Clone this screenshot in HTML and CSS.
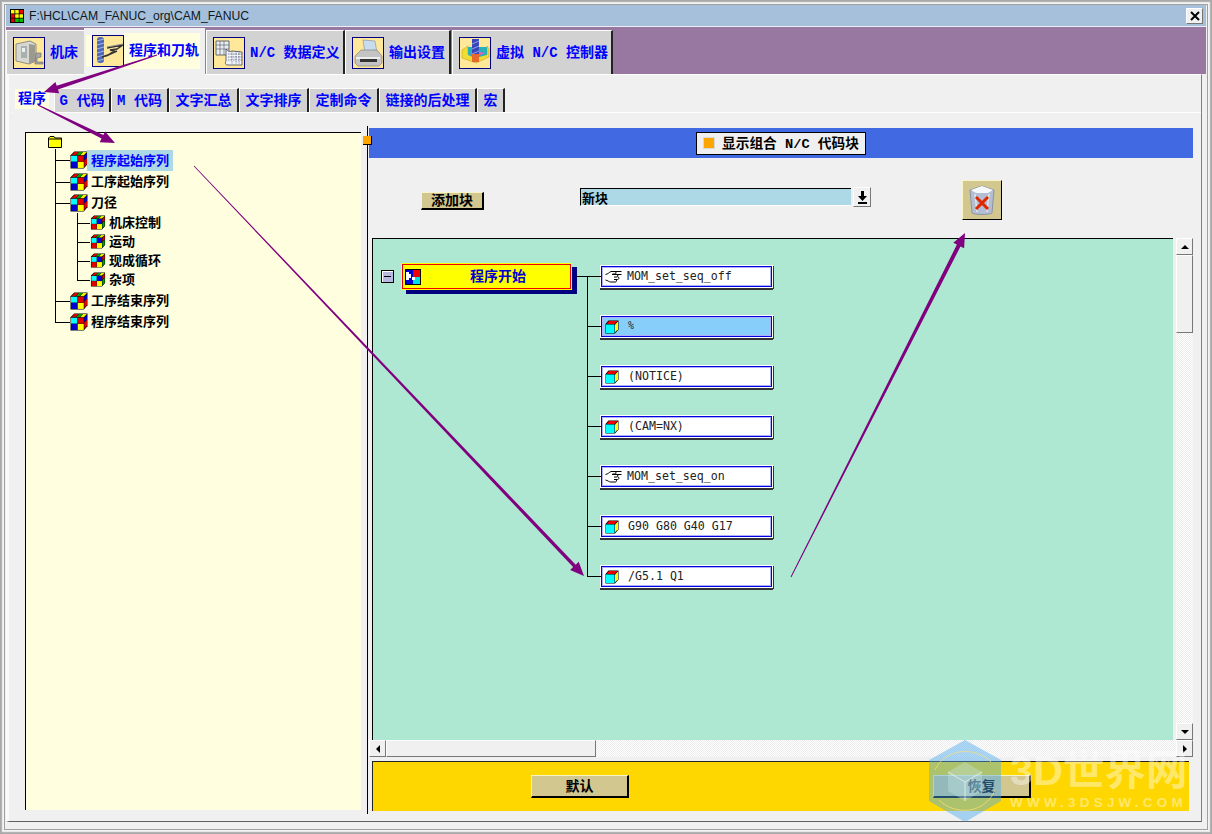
FILE: index.html
```html
<!DOCTYPE html>
<html lang="zh">
<head>
<meta charset="utf-8">
<title>CAM_FANUC</title>
<link rel="stylesheet" href="styles.css">
</head>
<body>
<svg class="defs" width="0" height="0" aria-hidden="true">
  <defs>
    <symbol id="rubik" viewBox="0 0 17 17">
      <path d="M4 .5h12.500v12L13 16.500H.5V4z" fill="#000"/>
      <path d="M4.500 1h3.600L5 4H1.500z" fill="#e00"/>
      <path d="M8.500 1h3.500L9 4H5.600z" fill="#00a000"/>
      <path d="M12.400 1H16l-3 3H9.500z" fill="#f0f000"/>
      <path d="M13.500 4.500 16 2v4l-2.500 2.500z" fill="#0000e0"/>
      <path d="M13.500 9 16 6.500V12l-2.500 3z" fill="#e00"/>
      <rect x="1" y="4.500" width="6" height="5.500" fill="#00ffff"/>
      <rect x="7.300" y="4.500" width="5.700" height="5.500" fill="#e00000"/>
      <rect x="1" y="10.300" width="6" height="5.700" fill="#0000d0"/>
      <rect x="7.300" y="10.300" width="5.700" height="5.700" fill="#ffff00"/>
    </symbol>
    <symbol id="rubik2" viewBox="0 0 17 17">
      <path d="M4 .5h12.500v12L13 16.500H.5V4z" fill="#000"/>
      <path d="M4.500 1h3.600L5 4H1.500z" fill="#e00"/>
      <path d="M8.500 1h3.500L9 4H5.600z" fill="#00a000"/>
      <path d="M12.400 1H16l-3 3H9.500z" fill="#f0f000"/>
      <path d="M13.500 4.500 16 2v4l-2.500 2.500z" fill="#e00"/>
      <path d="M13.500 9 16 6.500V12l-2.500 3z" fill="#00a000"/>
      <rect x="1" y="4.500" width="6" height="5.500" fill="#00ffff"/>
      <rect x="7.300" y="4.500" width="5.700" height="5.500" fill="#0000d0"/>
      <rect x="1" y="10.300" width="6" height="5.700" fill="#e00000"/>
      <rect x="7.300" y="10.300" width="5.700" height="5.700" fill="#ffff00"/>
    </symbol>
    <symbol id="cube" viewBox="0 0 14 14">
      <path d="M3.500.5h10v9L10 13.500H.5V4z" fill="#000"/>
      <path d="M4 1h8.500L9.500 4H1.500z" fill="#f00000"/>
      <path d="M10 4.500 13 1.500v7.800l-3 3z" fill="#ffff00"/>
      <rect x="1" y="4.500" width="8.500" height="8.500" fill="#00ffff"/>
    </symbol>
    <symbol id="hand" viewBox="0 0 18 14">
      <path d="M.5 4.500C3 4 4 2.500 6 1.500h10.500M9 1.500c2 0 3 2 1 2.500H7.500M7 4.500h9.500M12 4.500c1.500.5 1 2.500 0 2.500H9M13 7c1.500.5 1 2.500-.5 2.500H9M11 9.500c1 .5.500 2.500-.5 2.500H5.500C4 12 3 10.500.5 10" fill="#fff" stroke="#000" stroke-width="1"/>
    </symbol>
  </defs>
</svg>

<div class="window">
  <header class="titlebar">
    <svg class="app-icon" viewBox="0 0 14 14" width="14" height="14">
      <rect width="14" height="14" fill="#000"/>
      <rect x="1" y="1" width="3.500" height="3.500" fill="#ffff00"/>
      <rect x="5.250" y="1" width="3.500" height="3.500" fill="#ffff00"/>
      <rect x="9.500" y="1" width="3.500" height="3.500" fill="#f00000"/>
      <rect x="1" y="5.250" width="3.500" height="3.500" fill="#f00000"/>
      <rect x="5.250" y="5.250" width="3.500" height="3.500" fill="#ffff00"/>
      <rect x="9.500" y="5.250" width="3.500" height="3.500" fill="#ffff00"/>
      <rect x="1" y="9.500" width="3.500" height="3.500" fill="#e00000"/>
      <rect x="5.250" y="9.500" width="3.500" height="3.500" fill="#00c000"/>
      <rect x="9.500" y="9.500" width="3.500" height="3.500" fill="#00c000"/>
    </svg>
    <span class="title-text">F:\HCL\CAM_FANUC_org\CAM_FANUC</span>
    <button class="close-btn" type="button" aria-label="关闭">
      <svg viewBox="0 0 10 10" width="10" height="10"><path d="M1 1l8 8M9 1l-8 8" stroke="#000" stroke-width="2"/></svg>
    </button>
  </header>

  <nav class="main-tabs">
    <div class="main-tab tab-a">
      <span class="tab-icon">
        <svg viewBox="0 0 30 30" width="30" height="30">
          <path d="M2 6l14-3 6 3v17l-7 3-13-3z" fill="#d8d8d0" stroke="#777" stroke-width=".8"/>
          <path d="M7 8h6v12H7z" fill="#a8b0b0"/>
          <path d="M8 10h3v4H8z" fill="#e8f0f0"/>
          <path d="M15 6l6 1v16l-6 3z" fill="#9a9a90"/>
          <path d="M22 15h5v4l-4 1v4h6v2h-8z" fill="#a8a8a0" stroke="#666" stroke-width=".6"/>
        </svg>
      </span>
      <span class="tab-label">机床</span>
    </div>
    <div class="main-tab tab-b is-active">
      <span class="tab-icon">
        <svg viewBox="0 0 30 30" width="30" height="30">
          <rect x="4" y="1" width="7" height="26" rx="3" fill="#5068b8"/>
          <path d="M4 5l7-2M4 9l7-2M4 13l7-2M4 17l7-2M4 21l7-2M4 25l7-2" stroke="#a8b8e8" stroke-width="1"/>
          <path d="M14 12 30 9l-6 4-7 1 4 1-6 4-6 2M13 20l11-5" fill="none" stroke="#333" stroke-width="1.400"/>
          <path d="M14 11 30 8" stroke="#888" stroke-width="1"/>
        </svg>
      </span>
      <span class="tab-label">程序和刀轨</span>
    </div>
    <div class="main-tab tab-c">
      <span class="tab-icon">
        <svg viewBox="0 0 30 30" width="30" height="30">
          <path d="M2 3h13v14H2z" fill="#e8eef0" stroke="#445" stroke-width=".8"/>
          <path d="M2 7h13M2 11h13M6 3v14M10 3v14" stroke="#667" stroke-width=".7"/>
          <path d="M12 11c3 3 3 3 6 2l10 1v13H14c-3 0-3-2-2-4z" fill="#f0f4f8" stroke="#445" stroke-width=".8"/>
          <path d="M14 16h14M14 19h14M14 22h14M18 13v13M22 13v13M25 13v13" stroke="#557" stroke-width=".7" stroke-dasharray="1.500 1"/>
        </svg>
      </span>
      <span class="tab-label">N/C 数据定义</span>
    </div>
    <div class="main-tab tab-d">
      <span class="tab-icon">
        <svg viewBox="0 0 30 30" width="30" height="30">
          <path d="M10 2l12 1 2 12H12z" fill="#c8dcf0" stroke="#889" stroke-width=".6"/>
          <path d="M2 18l6-6h16l5 6v7l-3 3H5l-3-3z" fill="#c4c4c4" stroke="#777" stroke-width=".6"/>
          <path d="M3 19h24v2H3z" fill="#eee"/>
          <path d="M7 21h17v3H7z" fill="#333"/>
        </svg>
      </span>
      <span class="tab-label">输出设置</span>
    </div>
    <div class="main-tab tab-e">
      <span class="tab-icon">
        <svg viewBox="0 0 30 30" width="30" height="30">
          <path d="M2 12l6-4v8l7 3 12-3V8l2 3v8l-13 6-14-5z" fill="#f2dc30" stroke="#b89820" stroke-width=".5"/>
          <path d="M8 9h19v8l-12 3-7-3z" fill="#28b0b8"/>
          <path d="M10 16l5-3 10 2-9 4z" fill="#e060c0"/>
          <rect x="12" y="1" width="7" height="23" fill="#3848b8"/>
          <path d="M12 6l7-3M12 11l7-3M12 16l7-3" stroke="#90a0e8"/>
          <rect x="12" y="16" width="7" height="8" fill="#e8682c"/>
        </svg>
      </span>
      <span class="tab-label">虚拟 N/C 控制器</span>
    </div>
  </nav>

  <div class="panel">
    <nav class="sub-tabs">
      <div class="sub-tab st1 is-active"><span>程序</span></div>
      <div class="sub-tab st2"><span>G 代码</span></div>
      <div class="sub-tab st2b"><span>M 代码</span></div>
      <div class="sub-tab st3"><span>文字汇总</span></div>
      <div class="sub-tab st3"><span>文字排序</span></div>
      <div class="sub-tab st3"><span>定制命令</span></div>
      <div class="sub-tab st4"><span>链接的后处理</span></div>
      <div class="sub-tab st5"><span>宏</span></div>
    </nav>

    <div class="workspace">
      <section class="tree">
        <svg class="folder" viewBox="0 0 14 12" width="14" height="12">
          <path d="M.5 11.500V2L2 .5h4L7 2h6.500v9.500z" fill="#ffff00" stroke="#000"/>
          <path d="M1 3h12" stroke="#000"/>
        </svg>
        <div class="tree-list">
          <div class="node node-first"><svg class="ico-l"><use href="#rubik"/></svg><span class="node-text is-selected">程序起始序列</span></div>
          <div class="node"><svg class="ico-l"><use href="#rubik"/></svg><span class="node-text">工序起始序列</span></div>
          <div class="node"><svg class="ico-l"><use href="#rubik"/></svg><span class="node-text">刀径</span></div>
          <div class="sub-node sub-first"><svg class="ico-s"><use href="#rubik2"/></svg><span class="node-text">机床控制</span></div>
          <div class="sub-node"><svg class="ico-s"><use href="#rubik2"/></svg><span class="node-text">运动</span></div>
          <div class="sub-node"><svg class="ico-s"><use href="#rubik2"/></svg><span class="node-text">现成循环</span></div>
          <div class="sub-node sub-last"><svg class="ico-s"><use href="#rubik2"/></svg><span class="node-text">杂项</span></div>
          <div class="node"><svg class="ico-l"><use href="#rubik"/></svg><span class="node-text">工序结束序列</span></div>
          <div class="node node-last"><svg class="ico-l"><use href="#rubik"/></svg><span class="node-text">程序结束序列</span></div>
        </div>
      </section>

      <div class="splitter"><span class="handle"></span></div>

      <section class="editor">
        <div class="blue-bar">
          <div class="bar-label"><span class="orange-dot"></span><span class="bar-text">显示组合 N/C 代码块</span></div>
        </div>

        <div class="toolbar">
          <button class="khaki-btn add-btn" type="button">添加块</button>
          <div class="combo">
            <div class="combo-field">新块</div>
            <button class="combo-btn" type="button" aria-label="下拉">
              <svg viewBox="0 0 11 13" width="11" height="13"><path d="M4 0h3v5h3L5.500 10 1 5h3zM1 11h9v2H1z" fill="#000"/></svg>
            </button>
          </div>
          <button class="trash-btn" type="button" aria-label="删除">
            <svg viewBox="0 0 28 32" width="28" height="32">
              <path d="M2 6l12-4 12 4-2 23c-3 2-17 2-20 0z" fill="#b4bed2" stroke="#8088a0" stroke-width=".8"/>
              <path d="M3 6l11-4 11 4-5 3H8z" fill="#f6f8fc"/>
              <path d="M7 10l2 18M21 10l-2 18" stroke="#dfe5f0" stroke-width="1.500"/>
              <path d="M8 13l12 12M20 13 8 25" stroke="#e02800" stroke-width="3"/>
            </svg>
          </button>
        </div>

        <div class="view-row">
          <div class="canvas">
            <div class="diagram">
              <span class="minus-box"><span></span></span>
              <div class="root-wrap">
                <div class="root-node">
                  <svg class="puzzle" viewBox="0 0 16 16" width="16" height="16">
                    <rect width="16" height="16" fill="#000"/>
                    <rect x="1" y="1" width="7" height="14" fill="#0000d0"/>
                    <rect x="8" y="1" width="7" height="7" fill="#f00000"/>
                    <rect x="8" y="8" width="7" height="7" fill="#00e0e0"/>
                    <path d="M1 3h3v2h2v4H4v2H1zM7 8h3v3H7z" fill="#fff"/>
                  </svg>
                  <span class="root-text">程序开始</span>
                </div>
              </div>
              <div class="blocks">
                <div class="block"><svg class="ico-hand"><use href="#hand"/></svg><span class="block-text">MOM_set_seq_off</span></div>
                <div class="block is-current"><svg class="ico-cube"><use href="#cube"/></svg><span class="block-text">%</span></div>
                <div class="block"><svg class="ico-cube"><use href="#cube"/></svg><span class="block-text">(NOTICE)</span></div>
                <div class="block"><svg class="ico-cube"><use href="#cube"/></svg><span class="block-text">(CAM=NX)</span></div>
                <div class="block"><svg class="ico-hand"><use href="#hand"/></svg><span class="block-text">MOM_set_seq_on</span></div>
                <div class="block"><svg class="ico-cube"><use href="#cube"/></svg><span class="block-text">G90 G80 G40 G17</span></div>
                <div class="block"><svg class="ico-cube"><use href="#cube"/></svg><span class="block-text">/G5.1 Q1</span></div>
              </div>
            </div>
          </div>
          <div class="vscroll">
            <button class="sb-btn" type="button" aria-label="上"><span class="tri tri-up"></span></button>
            <div class="sb-thumb-v"></div>
            <div class="sb-track"></div>
            <button class="sb-btn" type="button" aria-label="下"><span class="tri tri-down"></span></button>
          </div>
        </div>

        <div class="hscroll">
          <button class="sb-btn" type="button" aria-label="左"><span class="tri tri-left"></span></button>
          <div class="sb-thumb-h"></div>
          <div class="sb-track"></div>
          <button class="sb-btn" type="button" aria-label="右"><span class="tri tri-right"></span></button>
        </div>

        <div class="action-bar">
          <button class="khaki-btn wide-btn" type="button">默认</button>
          <button class="khaki-btn wide-btn" type="button">恢复</button>
        </div>
      </section>
    </div>
  </div>

  <svg class="arrows" viewBox="0 0 1212 834" width="1212" height="834" aria-hidden="true">
    <polygon fill="#800080" points="157.200,55.500 57.900,89.550 59.200,93.350 44,92 55.400,81.950 56.700,85.750 156.800,54.500"/>
    <polygon fill="#800080" points="37.800,105.400 101.500,138.600 99.700,142.200 115,143 105.100,131.400 103.300,135 38.200,104.600"/>
    <polygon fill="#800080" points="193.700,166.300 573.100,567.100 570.100,570 584,576 578.700,561.800 575.700,564.700 194.300,165.700"/>
    <polygon fill="#800080" points="791.400,577.200 960.500,246.400 964.100,248.200 965,233 953.300,242.800 956.900,244.600 790.600,576.800"/>
  </svg>

  <div class="watermark">
    <svg class="wm-logo" viewBox="0 0 72 82" width="72" height="82" aria-hidden="true">
      <path d="M36 0l36 20v41L36 82 0 61V20z" fill="#4aa8f0" fill-opacity=".45"/>
      <path d="M36 22l17 10v19L36 61 19 51V32z" fill="#c8e8e8" fill-opacity=".35"/>
      <path d="M19 32l17 10 17-10M36 42v19" stroke="#ffffff" stroke-opacity=".6" fill="none"/>
      <path d="M6 30c10-22 40-24 56-8M66 50C56 74 26 76 10 60" stroke="#ffe070" stroke-opacity=".7" fill="none"/>
    </svg>
    <div class="wm-text">
      <div class="wm-big">3D世界网</div>
      <div class="wm-small">WWW.3DSJW.COM</div>
    </div>
  </div>
</div>
</body>
</html>
```

FILE: styles.css
```css
* { box-sizing: border-box; }

html, body { margin: 0; padding: 0; }

body {
  width: 1212px;
  height: 834px;
  overflow: hidden;
  font-family: "Noto Sans CJK SC", sans-serif;
  background: #f0f0f0;
}

button { padding: 0; margin: 0; font-family: inherit; cursor: default; }

.defs { position: absolute; }

.window {
  position: relative;
  width: 1212px;
  height: 834px;
  padding: 5px 6px 12px 6px;
  display: flex;
  flex-direction: column;
  background: #f0f0f0;
  box-shadow:
    inset 0 0 0 1px #a8a8a8,
    inset 0 0 0 2px #b4b4b4,
    inset 0 0 0 3px #e8e8e8,
    inset 0 0 0 4px #f4f4f4,
    inset 0 0 0 5px #a0a0a0;
}

/* Title bar */
.titlebar {
  height: 22px;
  flex: none;
  display: flex;
  align-items: center;
  padding-left: 4px;
  background: #a6c0dc;
  border-bottom: 1px solid #e8eef4;
}

.app-icon { flex: none; margin-right: 5px; }

.title-text {
  font-family: "Liberation Sans", sans-serif;
  font-size: 12.200px;
  color: #101820;
}

.close-btn {
  margin-left: auto;
  margin-right: 3px;
  width: 17px;
  height: 16px;
  display: flex;
  align-items: center;
  justify-content: center;
  background: #f0f0f0;
  border: 1px solid #fff;
  border-right-color: #777;
  border-bottom-color: #777;
}

/* Main tabs */
.main-tabs {
  height: 47px;
  flex: none;
  display: flex;
  align-items: stretch;
  background: #9878a0;
}

.main-tab {
  margin-top: 3px;
  display: flex;
  align-items: center;
  padding-left: 6px;
  background: #d2d2d2;
  border-top: 1px solid #fff;
  border-left: 1px solid #fff;
  border-right: 2px solid #222;
}

.tab-a { width: 78px; border-right: 0; }
.tab-b { width: 121px; }
.tab-c { width: 139px; margin-left: 1px; }
.tab-d { width: 106px; }
.tab-e { width: 161px; margin-left: 1px; }

.main-tab.is-active {
  margin-top: 1px;
  background: #f0f0f0;
  border: 0;
  padding-left: 8px;
  position: relative;
}

.tab-icon {
  flex: none;
  width: 32px;
  height: 32px;
  border: 1px solid #000080;
  background: #ffe89a;
  display: block;
}

.tab-icon svg { display: block; }

.tab-label {
  margin-left: 5px;
  margin-bottom: 0;
  font-family: "Liberation Mono", "Noto Sans CJK SC", monospace;
  font-weight: 700;
  font-size: 14px;
  line-height: 18px;
  color: #0000ff;
  white-space: pre;
}

.is-active .tab-label {
  margin-left: 0;
  margin-bottom: 2px;
  padding-left: 5px;
  padding-right: 1px;
  padding-bottom: 0;
  background: #ffffe0;
  line-height: 36px;
}

.main-tab.is-active .tab-icon { box-shadow: -6px 0 0 0 #ffffe0, 6px 0 0 0 #ffffe0; margin-bottom: 1px; }

/* Panel below tabs */
.panel {
  flex: 1;
  min-height: 0;
  display: flex;
  flex-direction: column;
  margin-right: 4px;
  padding: 13px 0 0 7px;
  border-top: 1px solid #fff;
  border-left: 3px solid #fafafa;
  border-right: 1px solid #808080;
  border-bottom: 1px solid #606060;
  background: #f0f0f0;
}

.tab-b.is-active { z-index: 1; margin-bottom: -1px; }

.sub-tabs {
  height: 25px;
  flex: none;
  display: flex;
  border-bottom: 1px solid #fff;
  margin-left: -4px;
  padding-left: 1px;
}

.sub-tab {
  height: 24px;
  display: flex;
  align-items: center;
  justify-content: center;
  padding-bottom: 4px;
  background: #d2d2d2;
  border-top: 1px solid #fff;
  border-left: 1px solid #fff;
  border-right: 2px solid #222;
  font-family: "Liberation Mono", "Noto Sans CJK SC", monospace;
  font-weight: 700;
  font-size: 14px;
  color: #0000ff;
  white-space: pre;
}

.sub-tab.st1 { width: 41px; padding-right: 3px; padding-bottom: 4px; }
.st2 { width: 57px; }
.st2b { width: 58px; }
.st3 { width: 70px; }
.st4 { width: 98px; }
.st5 { width: 28px; }

.sub-tab.is-active {
  background: #f0f0f0;
  border: 0;
  height: 25px;
}

.sub-tab.is-active > span { background: #ffffe0; padding: 0 3px; line-height: 20px; }

/* Workspace */
.workspace {
  flex: 1;
  min-height: 0;
  display: flex;
  padding-top: 19px;
  padding-left: 9px;
}

/* Tree */
.tree {
  width: 336px;
  flex: none;
  height: 678px;
  background: #ffffe0;
  border-top: 1px solid #000;
  border-left: 1px solid #000;
  padding: 3px 0 0 22px;
}

.folder { display: block; }

.tree-list {
  display: flex;
  flex-direction: column;
  margin-top: 1px;
  background: linear-gradient(#000, #000) 7px 0 / 1px 162px no-repeat;
}

.node, .sub-node {
  position: relative;
  display: flex;
  align-items: center;
  height: 21px;
}

.node-first { height: 22px; }

.node::before, .sub-node::before {
  content: "";
  position: absolute;
  background: #000;
  height: 1px;
  top: 50%;
}

.node::after, .sub-node::after {
  content: "";
  position: absolute;
  background: #000;
  width: 1px;
  top: 0;
  height: 100%;
}

.node { padding-left: 22px; }
.node::before { left: 7px; width: 15px; }
.node::after { left: 7px; }
.node-last::after { height: 50%; }

.sub-node { height: 19px; padding-left: 42px; }
.sub-node::before { left: 29px; width: 13px; }
.sub-node::after { left: 29px; }
.sub-last::after { height: 50%; }
.sub-last { margin-bottom: 1px; }

.sub-node > svg { position: relative; z-index: 1; }

.ico-l { width: 18px; height: 18px; flex: none; }
.ico-s { width: 16px; height: 15px; flex: none; }

.node-text {
  margin-left: 3px;
  padding-bottom: 2px;
  font-family: "Noto Sans CJK SC", sans-serif;
  font-weight: 700;
  font-size: 13px;
  line-height: 19px;
  color: #000;
  white-space: pre;
}

.node-text.is-selected {
  margin-left: -1px;
  padding: 0 4px 2px;
  background: #add8e6;
  color: #0000ff;
}

/* Splitter */
.splitter {
  position: relative;
  width: 1px;
  margin-left: 6px;
  margin-top: -6px;
  height: 688px;
  flex: none;
  background: #000;
}

.handle {
  position: absolute;
  left: -4px;
  top: 10px;
  width: 9px;
  height: 9px;
  background: #ffa500;
  border-right: 1px solid #000;
  border-bottom: 1px solid #000;
}

/* Editor */
.editor {
  width: 824px;
  flex: none;
  margin-left: 1px;
  margin-top: -4px;
  display: flex;
  flex-direction: column;
}

.blue-bar {
  height: 30px;
  flex: none;
  background: #4169e1;
  display: flex;
  align-items: center;
  justify-content: center;
}

.bar-label {
  width: 170px;
  height: 23px;
  display: flex;
  align-items: center;
  gap: 7px;
  padding-left: 6px;
  background: #f0f0f0;
  border: 1px solid #000;
  font-family: "Liberation Mono", "Noto Sans CJK SC", monospace;
  font-weight: 700;
  font-size: 13.700px;
  color: #000;
  white-space: pre;
}

.bar-text { padding-bottom: 3px; }

.orange-dot {
  width: 12px;
  height: 12px;
  background: #ffa500;
  border: 1px solid #d8d8d8;
  flex: none;
}

.toolbar {
  height: 80px;
  flex: none;
  position: relative;
  display: flex;
  align-items: flex-start;
  padding-left: 52px;
}

.khaki-btn {
  display: block;
  background: #d1c78f;
  border: 1px solid #f8f4c8;
  border-right: 2px solid #000;
  border-bottom: 2px solid #000;
  font-family: "Noto Sans CJK SC", sans-serif;
  font-weight: 700;
  font-size: 14px;
  color: #000;
}

.add-btn { width: 63px; height: 18px; margin-top: 34px; line-height: 12px; padding-bottom: 3px; }

.combo { display: flex; align-items: flex-start; margin-left: 96px; margin-top: 30px; }

.combo-field {
  width: 271px;
  height: 18px;
  padding-left: 1px;
  background: #add8e6;
  border-top: 1px solid #000;
  border-left: 1px solid #000;
  border-bottom: 1px solid #fff;
  font-weight: 700;
  font-size: 13px;
  line-height: 17px;
  color: #000;
}

.combo-btn {
  width: 18px;
  height: 20px;
  margin-left: 2px;
  margin-top: -1px;
  display: flex;
  align-items: center;
  justify-content: center;
  background: #f0f0f0;
  border: 1px solid #fff;
  border-right-color: #777;
  border-bottom-color: #777;
}

.trash-btn {
  width: 40px;
  height: 40px;
  margin-left: 91px;
  margin-top: 22px;
  display: flex;
  align-items: center;
  justify-content: center;
  background: #d1c78f;
  border: 1px solid #f8f4c8;
  border-right: 1px solid #000;
  border-bottom: 1px solid #000;
}

/* Canvas */
.view-row {
  height: 502px;
  flex: none;
  display: flex;
  padding-left: 3px;
}

.canvas {
  width: 801px;
  flex: none;
  background: #aee8d3;
  border-top: 1px solid #000;
  border-left: 1px solid #000;
  padding: 26px 0 0 8px;
}

.diagram { display: flex; align-items: flex-start; }

.minus-box {
  flex: none;
  width: 13px;
  height: 13px;
  margin-top: 5px;
  margin-right: 7px;
  display: flex;
  align-items: center;
  justify-content: center;
  background: #b8b8e0;
  border: 1px solid #000;
  box-shadow: inset 1px 1px 0 #fff;
}

.minus-box span { width: 7px; height: 1px; background: #000; }

.root-wrap { position: relative; width: 175px; flex: none; margin-top: -2px; }

.root-node {
  width: 171px;
  height: 27px;
  display: flex;
  align-items: center;
  padding-left: 3px;
  background: #ffff00;
  border: 1px solid #ffff00;
  outline: 1px solid #f00000;
  outline-offset: -2px;
  box-shadow: 5px 4px 0 #000080;
  position: relative;
}

.root-wrap::after {
  content: "";
  position: absolute;
  left: 175px;
  top: 13px;
  width: 24px;
  height: 1px;
  background: #000;
}

.puzzle { flex: none; }

.root-text {
  margin-left: 49px;
  padding-bottom: 3px;
  font-weight: 700;
  font-size: 14px;
  color: #0000d0;
  white-space: pre;
}

.blocks {
  margin-left: 24px;
  display: flex;
  flex-direction: column;
  gap: 27px;
  position: relative;
}

.block {
  position: relative;
  width: 173px;
  height: 23px;
  display: flex;
  align-items: center;
  padding-left: 4px;
  background: #fff;
  border: 1px solid #fff;
  box-shadow:
    inset 0 0 0 1px #0000e0,
    inset 0 0 0 2px #b0b0f8,
    1px 1px 0 #333,
    0 2px 0 #333;
}

.block::before {
  content: "";
  position: absolute;
  left: -14px;
  top: 10px;
  width: 14px;
  height: 1px;
  background: #000;
}

.block::after {
  content: "";
  position: absolute;
  left: -14px;
  top: -40px;
  width: 1px;
  height: 50px;
  background: #000;
}

.block:first-child::after { display: none; }

.block.is-current { background: #87cefa; }

.ico-hand { width: 18px; height: 14px; flex: none; position: relative; }
.ico-cube { width: 14px; height: 14px; flex: none; margin-right: 5px; }
.ico-hand + .block-text { margin-left: 4px; }

.block-text {
  margin-left: 4px;
  padding-bottom: 2px;
  font-family: "DejaVu Sans Mono", monospace;
  font-size: 11.600px;
  color: #222;
  white-space: pre;
}

.block:nth-child(2) .block-text { font-size: 10px; }

/* Scrollbars */
.vscroll {
  width: 17px;
  flex: none;
  margin-left: 3px;
  display: flex;
  flex-direction: column;
}

.hscroll {
  height: 17px;
  flex: none;
  display: flex;
}

.sb-btn {
  width: 17px;
  height: 17px;
  flex: none;
  display: flex;
  align-items: center;
  justify-content: center;
  background: #f0f0f0;
  border: 1px solid #fff;
  border-right-color: #777;
  border-bottom-color: #777;
}

.sb-thumb-v {
  height: 78px;
  flex: none;
  background: #f0f0f0;
  border: 1px solid #fff;
  border-right-color: #777;
  border-bottom-color: #777;
}

.sb-thumb-h {
  width: 210px;
  flex: none;
  background: #f0f0f0;
  border: 1px solid #fff;
  border-right-color: #777;
  border-bottom-color: #777;
}

.sb-track {
  flex: 1;
  background: repeating-conic-gradient(#ffffff 0 25%, #ececec 0 50%) 0 0 / 2px 2px;
}

.tri { width: 0; height: 0; display: block; border: 4px solid transparent; }
.tri-up { border-top: 0; border-bottom-color: #000; }
.tri-down { border-bottom: 0; border-top-color: #000; }
.tri-left { border-left: 0; border-right-color: #000; }
.tri-right { border-right: 0; border-left-color: #000; }

/* Action bar */
.action-bar {
  width: 817px;
  height: 50px;
  flex: none;
  margin-left: 3px;
  margin-top: 4px;
  display: flex;
  gap: 304px;
  padding: 13px 0 0 158px;
  background: #ffd700;
  border-top: 1px solid #222;
  border-left: 1px solid #222;
}

.wide-btn { width: 98px; height: 23px; line-height: 17px; padding-bottom: 2px; }

/* Overlays */
.arrows {
  position: absolute;
  left: 0;
  top: 0;
  z-index: 5;
  pointer-events: none;
}

.watermark {
  position: absolute;
  left: 929px;
  top: 740px;
  z-index: 6;
  display: flex;
  gap: 9px;
  pointer-events: none;
}

.wm-logo { flex: none; }

.wm-text { margin-top: 7px; }

.wm-big {
  font-family: "Liberation Sans", "Noto Sans CJK SC", sans-serif;
  font-weight: 700;
  font-size: 41.500px;
  line-height: 48px;
  color: rgba(255, 255, 255, .42);
  white-space: pre;
}

.wm-small {
  margin-top: 1px;
  font-family: "Liberation Sans", sans-serif;
  font-weight: 700;
  font-size: 13.500px;
  letter-spacing: 4.200px;
  line-height: 14px;
  color: rgba(255, 255, 255, .42);
  white-space: pre;
}
```
